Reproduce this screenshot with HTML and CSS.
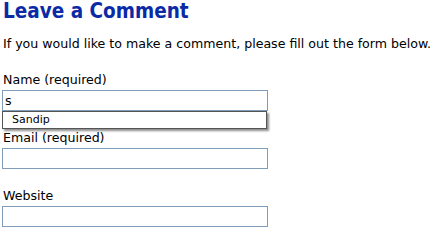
FILE: index.html
```html
<!DOCTYPE html>
<html lang="en">
<head>
    <meta charset="UTF-8">
    <title>Leave a Comment</title>
    <link rel="stylesheet" href="styles.css">
</head>
<body>
    <h2 class="title">Leave a Comment</h2>
    <p class="intro">If you would like to make a comment, please fill out the form below.</p>

    <form class="comment-form">
        <div class="field">
            <label for="name">Name (required)</label>
            <div class="input-wrap">
                <input type="text" id="name" class="text-input" value="s">
                <div class="suggest">
                    <div class="suggest-item">Sandip</div>
                </div>
            </div>
        </div>
        <div class="field">
            <label for="email">Email (required)</label>
            <input type="text" id="email" class="text-input">
        </div>
        <div class="field">
            <label for="website">Website</label>
            <input type="text" id="website" class="text-input">
        </div>
    </form>
</body>
</html>
```

FILE: styles.css
```css
body {
    margin: 0;
    padding: 0 3px;
    font-family: "DejaVu Sans", Verdana, sans-serif;
    font-size: 12.6px;
    color: #000;
    background: #fff;
}

.title {
    margin: 0;
    font-family: "DejaVu Sans Condensed", "DejaVu Sans", sans-serif;
    font-size: 20.5px;
    line-height: 22px;
    font-weight: bold;
    color: #0a2aa6;
}

.intro {
    margin: 14px 0 0;
    line-height: 16px;
}

.comment-form {
    margin-top: 20px;
}

.field {
    margin-bottom: 19px;
}

.field:last-child {
    margin-bottom: 0;
}

.field label {
    display: block;
    line-height: 16px;
    margin-bottom: 2px;
}

.input-wrap {
    position: relative;
}

.text-input {
    display: block;
    box-sizing: border-box;
    width: 266px;
    height: 21px;
    margin: 0 0 0 -1px;
    padding: 1px 2px;
    border: 1px solid #7f9db9;
    font-family: "DejaVu Sans", Verdana, sans-serif;
    font-size: 12.6px;
    outline: none;
}

.suggest {
    position: absolute;
    left: -1px;
    top: 21px;
    width: 265px;
    height: 18px;
    box-sizing: border-box;
    background: #fff;
    border: 1px solid #555;
    box-shadow: 2px 2px 2px rgba(0, 0, 0, 0.45);
}

.suggest-item {
    padding-left: 9px;
    font-size: 11px;
    line-height: 16px;
}
```
